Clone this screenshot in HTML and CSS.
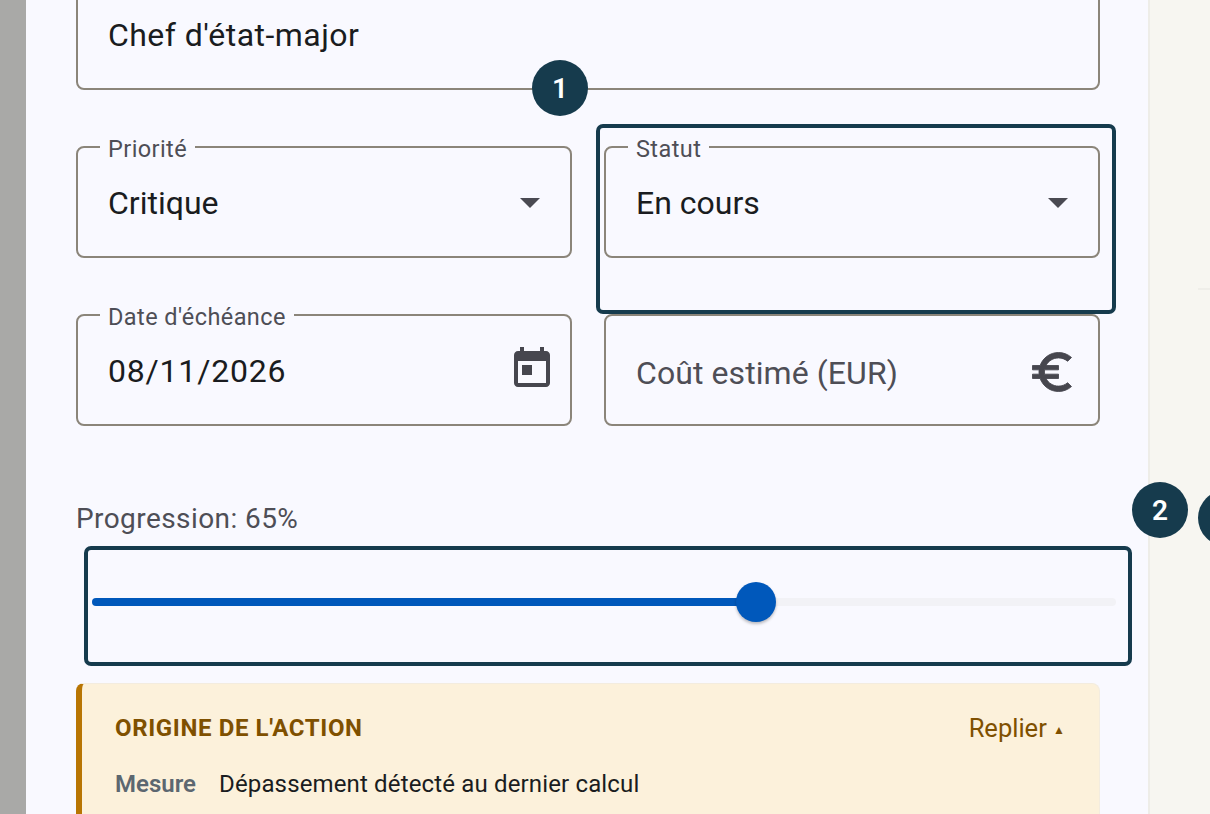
FILE: index.html
```html
<!DOCTYPE html>
<html lang="fr">
<head>
<meta charset="utf-8">
<title>Action</title>
<link rel="stylesheet" href="styles.css">
</head>
<body>
<div class="scrim"></div>
<main class="panel">
  <form class="grid">
    <div class="field wide"><span class="value long">Chef d'état-major</span></div>
    <div class="field">
      <span class="legend">Priorité</span><span class="value">Critique</span>
      <svg class="caret" viewBox="0 0 24 24"><path d="M7 10l5 5 5-5z"/></svg>
    </div>
    <div class="field">
      <span class="legend">Statut</span><span class="value">En cours</span>
      <svg class="caret" viewBox="0 0 24 24"><path d="M7 10l5 5 5-5z"/></svg>
    </div>
    <div class="field">
      <span class="legend">Date d'échéance</span><span class="value date">08/11/2026</span>
      <svg class="icon" viewBox="0 0 24 24"><path d="M19 3h-1V1h-2v2H8V1H6v2H5c-1.11 0-1.99.9-1.99 2L3 19c0 1.1.89 2 2 2h14c1.1 0 2-.9 2-2V5c0-1.1-.9-2-2-2zm0 16H5V8h14v11zM7 10h5v5H7z"/></svg>
    </div>
    <div class="field">
      <span class="value placeholder">Coût estimé (EUR)</span>
      <svg class="icon euro" viewBox="0 0 24 24"><path d="M15 18.5c-2.51 0-4.68-1.42-5.76-3.5H15v-2H8.58c-.05-.33-.08-.66-.08-1s.03-.67.08-1H15V9H9.24C10.32 6.92 12.5 5.5 15 5.5c1.61 0 3.09.59 4.23 1.57L21 5.3C19.41 3.87 17.3 3 15 3c-3.92 0-7.24 2.51-8.48 6H3v2h3.06c-.04.33-.06.66-.06 1s.02.67.06 1H3v2h3.52c1.24 3.49 4.56 6 8.48 6 2.31 0 4.41-.87 6-2.3l-1.78-1.77c-1.13.98-2.6 1.57-4.22 1.57z"/></svg>
    </div>
  </form>
  <div class="progress-label">Progression: 65%</div>
  <div class="slider">
    <div class="track"><div class="fill" style="width:65%"><span class="thumb"></span></div></div>
  </div>
  <section class="origin">
    <header class="origin-head">
      <h2 class="origin-title">ORIGINE DE L'ACTION</h2>
      <span class="origin-toggle">Replier <span class="tri">▲</span></span>
    </header>
    <div class="origin-row"><span class="origin-key">Mesure</span><span class="origin-val">Dépassement détecté au dernier calcul</span></div>
  </section>
</main>
<aside class="side"><div class="side-rule"></div></aside>
<div class="spot spot-statut"></div>
<div class="spot spot-slider"></div>
<div class="badge b1">1</div>
<div class="badge b2">2</div>
<div class="badge b3"></div>
</body>
</html>
```
FILE: styles.css
```css
* { box-sizing: border-box; }
html, body { margin: 0; height: 814px; overflow: hidden; }
body {
  position: relative;
  display: flex;
  width: 1210px;
  background: #f7f6f1;
  font-family: Roboto, "Noto Sans", sans-serif;
  color: #1a1c20;
}
.scrim { width: 26px; flex: none; background: #a9a9a7; }
.panel {
  width: 1124px;
  flex: none;
  height: 836px;
  margin-top: -22px;
  padding: 0 48px 0 50px;
  background: #f9f9ff;
  border-right: 2px solid #eeede8;
}
.grid {
  display: grid;
  grid-template-columns: 496px 496px;
  gap: 56px 32px;
}
.field {
  position: relative;
  height: 112px;
  display: flex;
  align-items: center;
  padding: 0 30px;
  border: 2px solid #8b857a;
  border-radius: 8px;
}
.wide { grid-column: 1 / 3; }
.value { margin-top: 2px; font-size: 32px; letter-spacing: 0; line-height: 40px; }
.long { letter-spacing: 0.45px; }
.date { letter-spacing: 0.8px; }
.placeholder { color: #4e4e56; margin-top: 6px; letter-spacing: 0.08px; }
.legend {
  position: absolute;
  left: 22px;
  top: -12px;
  padding: 0 8px;
  background: #f9f9ff;
  font-size: 23.5px;
  line-height: 26px;
  letter-spacing: 0.42px;
  color: #4e4e56;
}
.caret { position: absolute; right: 16px; top: 30px; width: 48px; height: 48px; fill: #4a4a52; }
.icon { position: absolute; right: 14px; top: 29px; width: 48px; height: 48px; fill: #46464e; }
.euro { right: 20px; top: 30px; width: 52px; height: 52px; stroke: #46464e; stroke-width: 0.4px; }
.progress-label {
  margin-top: 75px;
  font-size: 28px;
  line-height: 36px;
  letter-spacing: 0.42px;
  color: #4e4e56;
}
.slider { height: 146px; margin-left: 16px; width: 1024px; padding-top: 61px; }
.track { height: 8px; border-radius: 4px; background: #f2f2f6; }
.fill { position: relative; height: 8px; border-radius: 4px; background: #0058bb; }
.thumb {
  position: absolute;
  right: -18px;
  top: -16px;
  width: 40px;
  height: 40px;
  border-radius: 50%;
  background: #0058bb;
  box-shadow: 0 2px 3px rgba(0,0,0,.25);
}
.origin {
  height: 200px;
  padding: 27px 34px 0 33px;
  background: #fcf1db;
  border: 1px solid #f3ecdf;
  border-left: 6px solid #b87503;
  border-radius: 8px;
}
.origin-head { display: flex; justify-content: space-between; align-items: center; height: 34px; }
.origin-title { margin: 0; font-size: 24px; font-weight: 700; letter-spacing: 0.62px; color: #7f5000; }
.origin-toggle { font-size: 25.5px; color: #7f5000; }
.tri { font-size: 12px; vertical-align: 3px; }
.origin-row { display: flex; gap: 23px; margin-top: 22px; font-size: 24px; line-height: 34px; }
.origin-key { font-weight: 600; color: #5c6770; }
.origin-val { letter-spacing: 0.15px; }
.side { flex: 1; padding: 288px 0 0 48px; }
.side-rule { height: 2px; background: #efeee9; }
.spot { position: absolute; border: 4px solid #163b4d; border-radius: 7px; }
.spot-statut { left: 596px; top: 124px; width: 520px; height: 190px; }
.spot-slider { left: 84px; top: 546px; width: 1048px; height: 120px; }
.badge {
  position: absolute;
  width: 56px;
  height: 56px;
  border-radius: 50%;
  background: #163b4d;
  color: #fff;
  display: flex;
  align-items: center;
  justify-content: center;
  font-size: 28px;
  font-weight: 600;
}
.b1 { left: 532px; top: 60px; }
.b2 { left: 1132px; top: 482px; }
.b3 { left: 1198px; top: 490px; }
```
